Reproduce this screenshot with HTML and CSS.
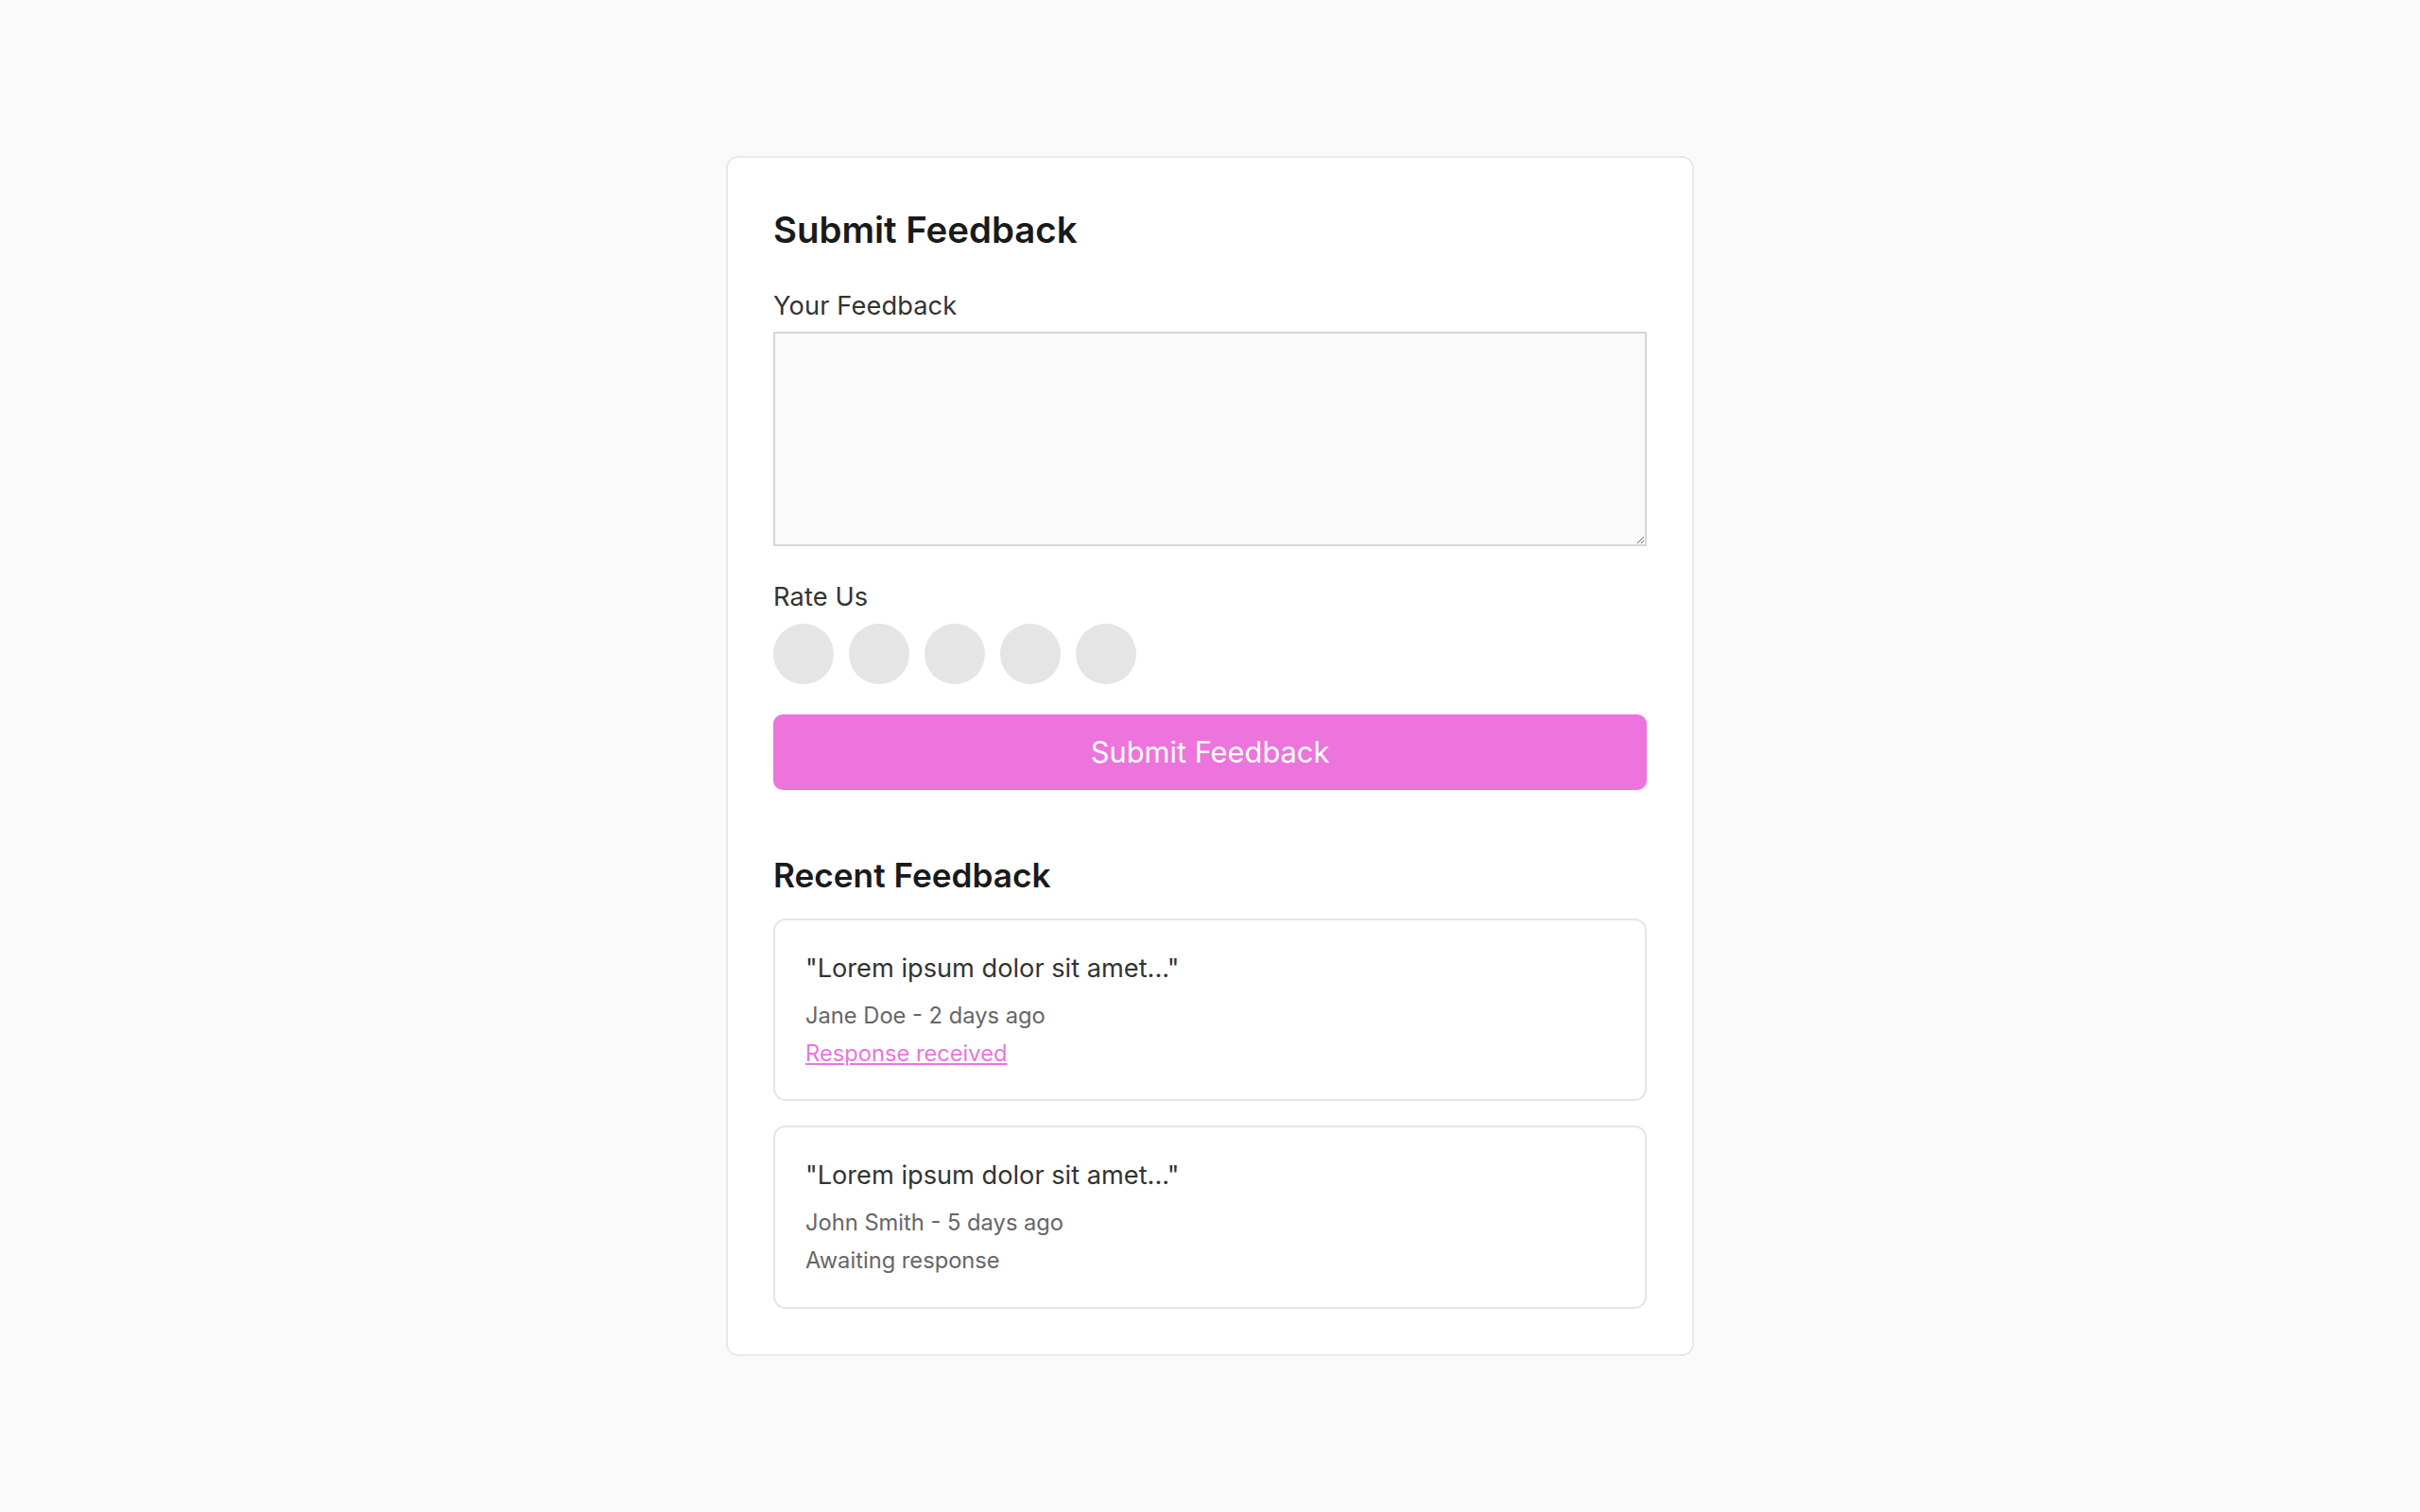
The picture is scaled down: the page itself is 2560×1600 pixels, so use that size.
FILE: index.html
```html
<!DOCTYPE html>
<html lang="en">
<head>
    <meta charset="UTF-8">
    <meta name="viewport" content="width=device-width, initial-scale=1.0">
    <title>Submit Feedback</title>
    <link rel="stylesheet" href="styles.css">
</head>
<body>
    <div class="feedback-card">
        <h2 class="card-title">Submit Feedback</h2>
        <div class="field">
            <label for="feedback">Your Feedback</label>
            <textarea id="feedback" class="feedback-input"></textarea>
        </div>
        <div class="field">
            <label>Rate Us</label>
            <div class="rating">
                <span class="rating-dot"></span>
                <span class="rating-dot"></span>
                <span class="rating-dot"></span>
                <span class="rating-dot"></span>
                <span class="rating-dot"></span>
            </div>
        </div>
        <button class="submit-button">Submit Feedback</button>

        <div class="recent">
            <h3 class="recent-title">Recent Feedback</h3>
            <div class="feedback-item">
                <p class="quote">"Lorem ipsum dolor sit amet..."</p>
                <p class="meta">Jane Doe - 2 days ago</p>
                <a href="#" class="status received">Response received</a>
            </div>
            <div class="feedback-item">
                <p class="quote">"Lorem ipsum dolor sit amet..."</p>
                <p class="meta">John Smith - 5 days ago</p>
                <span class="status">Awaiting response</span>
            </div>
        </div>
    </div>
</body>
</html>
```

FILE: styles.css
```css
body {
    margin: 0;
    min-height: 100vh;
    display: flex;
    align-items: center;
    justify-content: center;
    background: #fafafa;
    font-family: Inter, "Noto Sans", sans-serif;
    line-height: 1.5;
}
.feedback-card {
    width: 1024px;
    box-sizing: border-box;
    padding: 48px;
    background: #fff;
    border: 2px solid #e8e8e8;
    border-radius: 13px;
}
.card-title {
    margin: 0 0 32px;
    font-size: 38.4px;
    line-height: 57.6px;
    font-weight: 600;
    color: #1a1a1a;
}
.field label {
    display: block;
    margin-bottom: 8px;
    font-size: 27.2px;
    line-height: 38.4px;
    letter-spacing: 0.005em;
    color: #333;
}
.feedback-input {
    display: block;
    width: 100%;
    height: 227px;
    box-sizing: border-box;
    margin-bottom: 35px;
    border: 2px solid #d6d6d6;
    background: #fafafa;
    font-family: inherit;
}
.rating {
    display: flex;
    gap: 16px;
}
.rating-dot {
    width: 64px;
    height: 64px;
    border-radius: 50%;
    background: #e5e5e5;
}
.submit-button {
    display: block;
    width: 100%;
    height: 80px;
    margin-top: 32px;
    border: none;
    border-radius: 10px;
    background: #ec74dc;
    color: #fff;
    font-family: inherit;
    font-size: 30.8px;
    cursor: pointer;
}
.recent {
    margin-top: 64px;
}
.recent-title {
    margin: 0 0 20px;
    font-size: 35.2px;
    line-height: 52px;
    font-weight: 600;
    color: #1a1a1a;
}
.feedback-item {
    margin-bottom: 25.6px;
    padding: 32px;
    border: 2px solid #e5e5e5;
    border-radius: 13px;
}
.feedback-item:last-child {
    margin-bottom: 0;
}
.quote {
    margin: 0 0 14px;
    font-size: 27.2px;
    line-height: 38.4px;
    color: #333;
}
.meta {
    margin: 0 0 6px;
    font-size: 23.7px;
    line-height: 33.6px;
    color: #666;
}
.status {
    display: block;
    font-size: 23.7px;
    line-height: 33.6px;
    color: #666;
}
.status.received {
    color: #ec74dc;
    text-decoration: underline;
}
```
